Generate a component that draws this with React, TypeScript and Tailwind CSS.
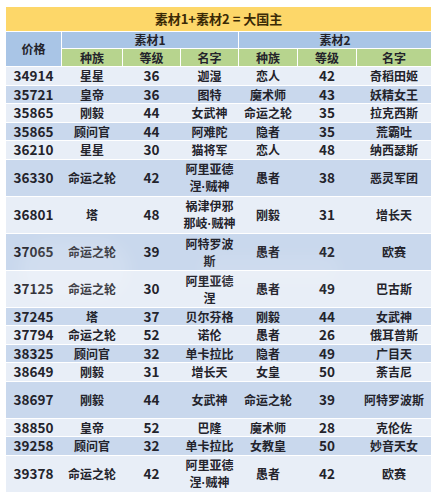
const cols = "grid grid-cols-[55px_60px_57px_57px_58px_58px_74px] gap-px";

type Row = {
  price: string;
  r1: string;
  l1: string;
  n1: string[];
  r2: string;
  l2: string;
  n2: string;
  tall?: boolean;
};

const rows: Row[] = [
  { price: "34914", r1: "星星", l1: "36", n1: ["迦湿"], r2: "恋人", l2: "42", n2: "奇稻田姬" },
  { price: "35721", r1: "皇帝", l1: "36", n1: ["图特"], r2: "魔术师", l2: "43", n2: "妖精女王" },
  { price: "35865", r1: "刚毅", l1: "44", n1: ["女武神"], r2: "命运之轮", l2: "35", n2: "拉克西斯" },
  { price: "35865", r1: "顾问官", l1: "44", n1: ["阿难陀"], r2: "隐者", l2: "35", n2: "荒霸吐" },
  { price: "36210", r1: "星星", l1: "30", n1: ["猫将军"], r2: "恋人", l2: "48", n2: "纳西瑟斯" },
  { price: "36330", r1: "命运之轮", l1: "42", n1: ["阿里亚德", "涅·贼神"], r2: "愚者", l2: "38", n2: "恶灵军团", tall: true },
  { price: "36801", r1: "塔", l1: "48", n1: ["祸津伊邪", "那岐·贼神"], r2: "刚毅", l2: "31", n2: "增长天", tall: true },
  { price: "37065", r1: "命运之轮", l1: "39", n1: ["阿特罗波", "斯"], r2: "愚者", l2: "42", n2: "欧赛", tall: true },
  { price: "37125", r1: "命运之轮", l1: "30", n1: ["阿里亚德", "涅"], r2: "愚者", l2: "49", n2: "巴古斯", tall: true },
  { price: "37245", r1: "塔", l1: "37", n1: ["贝尔芬格"], r2: "刚毅", l2: "44", n2: "女武神" },
  { price: "37794", r1: "命运之轮", l1: "52", n1: ["诺伦"], r2: "愚者", l2: "26", n2: "俄耳普斯" },
  { price: "38325", r1: "顾问官", l1: "32", n1: ["单卡拉比"], r2: "隐者", l2: "49", n2: "广目天" },
  { price: "38649", r1: "刚毅", l1: "31", n1: ["增长天"], r2: "女皇", l2: "50", n2: "荼吉尼" },
  { price: "38697", r1: "刚毅", l1: "44", n1: ["女武神"], r2: "命运之轮", l2: "39", n2: "阿特罗波斯", tall: true },
  { price: "38850", r1: "皇帝", l1: "52", n1: ["巴隆"], r2: "魔术师", l2: "28", n2: "克伦佐" },
  { price: "39258", r1: "顾问官", l1: "32", n1: ["单卡拉比"], r2: "女教皇", l2: "50", n2: "妙音天女" },
  { price: "39378", r1: "命运之轮", l1: "42", n1: ["阿里亚德", "涅·贼神"], r2: "愚者", l2: "42", n2: "欧赛", tall: true },
];

// the middle dot is full width in the CJK font, so set it in a narrow one
function Name({ text }: { text: string }) {
  const parts = text.split("·");
  if (parts.length === 1) return <span className="whitespace-nowrap">{text}</span>;
  return (
    <span className="whitespace-nowrap">
      {parts[0]}
      <span style={{ fontFamily: '"Liberation Sans", sans-serif' }}>·</span>
      {parts[1]}
    </span>
  );
}

function Cell({ children, num }: { children: React.ReactNode; num?: boolean }) {
  return (
    <div
      className={
        num
          ? "flex items-center justify-center text-[13.5px] leading-[17px]"
          : "flex flex-col items-center justify-center text-[12px] leading-[17px]"
      }
    >
      {children}
    </div>
  );
}

export default function App() {
  return (
    <div
      className="relative w-[437px] h-[500px] bg-white pt-[7px] px-[6px] font-bold text-[#23232b]"
      style={{ fontFamily: '"Noto Sans CJK SC", "Noto Sans", sans-serif' }}
    >
      <div className="flex flex-col gap-px">
        <div className="h-[24px] bg-[#fdd769] flex items-center justify-center text-[13px] text-[#3a2a06]">
          素材1+素材2 = 大国主
        </div>

        <div className={`${cols} grid-rows-[16px_17px] text-[12px]`}>
          <div className="row-span-2 bg-[#a9c5e6] flex items-center justify-center">价格</div>
          <div className="col-span-3 bg-[#a9c5e6] flex items-center justify-center">素材1</div>
          <div className="col-span-3 bg-[#a9c5e6] flex items-center justify-center">素材2</div>
          {["种族", "等级", "名字", "种族", "等级", "名字"].map((h, i) => (
            <div key={i} className="bg-[#b7d48e] flex items-center justify-center">
              {h}
            </div>
          ))}
        </div>

        {rows.map((r, i) => (
          <div
            key={i}
            className={`${cols} ${r.tall ? "h-[36px]" : "h-[17.5px]"} ${
              i % 2 === 0 ? "bg-[#e8eef7]" : "bg-[#c9d8ed]"
            }`}
          >
            <Cell num>{r.price}</Cell>
            <Cell>{r.r1}</Cell>
            <Cell num>{r.l1}</Cell>
            <Cell>
              {r.n1.map((t, k) => (
                <Name key={k} text={t} />
              ))}
            </Cell>
            <Cell>{r.r2}</Cell>
            <Cell num>{r.l2}</Cell>
            <Cell>
              <Name text={r.n2} />
            </Cell>
          </div>
        ))}
      </div>

      {/* faint watermark */}
      <div className="pointer-events-none absolute left-[20px] top-[240px] w-[110px] h-[60px] rounded-full bg-white/15 blur-sm" />
      <div className="pointer-events-none absolute left-[200px] top-[255px] w-[140px] h-[30px] rounded-full bg-white/10 blur-sm" />
    </div>
  );
}
